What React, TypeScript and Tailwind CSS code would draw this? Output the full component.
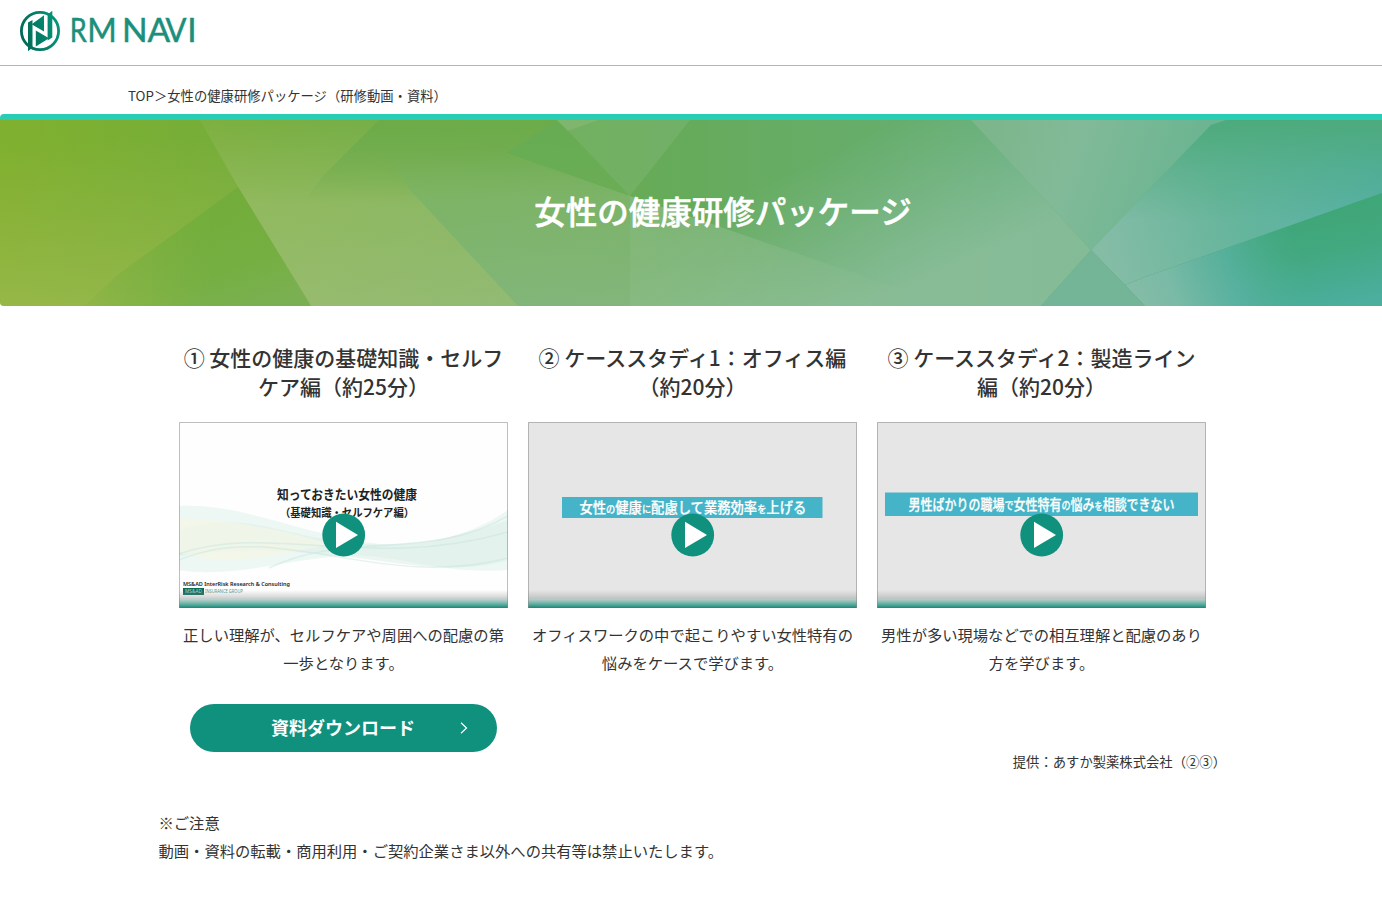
import React from "react";

const JP = "font-['Noto_Sans_CJK_JP',sans-serif]";

function Logo() {
  return (
    <svg className="block h-[46px] w-[180px]" viewBox="18 8 180 46" role="img" aria-label="RM NAVI">
      <defs>
        <linearGradient id="mark" x1="22" y1="36" x2="58" y2="26" gradientUnits="userSpaceOnUse">
          <stop offset="0" stopColor="#006a55" />
          <stop offset="1" stopColor="#07937a" />
        </linearGradient>
      </defs>
      <circle cx="40" cy="31" r="18.6" fill="none" stroke="url(#mark)" strokeWidth="2.8" />
      <g fill="url(#mark)">
        <path d="M28 22.600L32.500 20V47.500L28 51.200Z" />
        <path d="M47.600 14.500L52.300 10.800V37.500L47.600 40.500Z" />
        <path d="M31 24.800L44 15.200V31.500L32 24.500Z" />
        <path d="M35.800 30.500L49 38.200L35.800 46.500Z" />
      </g>
      <text y="42.3" fontSize="33.5" fill="#1b8f7b" stroke="#1b8f7b" strokeWidth=".5" className="font-['Lato'] font-normal">
        <tspan x="69.8" textLength="17" lengthAdjust="spacingAndGlyphs">R</tspan>
        <tspan x="87.2" textLength="29.500" lengthAdjust="spacingAndGlyphs">M</tspan>
        <tspan x="122">N</tspan>
        <tspan x="147.4">A</tspan>
        <tspan x="165.400" textLength="21" lengthAdjust="spacingAndGlyphs">V</tspan>
        <tspan x="187.2">I</tspan>
      </text>
    </svg>
  );
}

function BannerArt() {
  return (
    <svg className="absolute inset-0 h-full w-full" viewBox="0 0 1382 186" preserveAspectRatio="none" aria-hidden="true">
      <defs>
        <linearGradient id="base">
          <stop offset="0" stopColor="#80b02e" />
          <stop offset=".14" stopColor="#77ae38" />
          <stop offset=".33" stopColor="#6cab48" />
          <stop offset=".5" stopColor="#66ab5c" />
          <stop offset=".68" stopColor="#66ae70" />
          <stop offset=".85" stopColor="#52ab7c" />
          <stop offset="1" stopColor="#48aa88" />
        </linearGradient>
        <linearGradient id="light" x1="0" y1="0" x2="0" y2="186" gradientUnits="userSpaceOnUse">
          <stop offset="0" stopColor="#a8c070" stopOpacity=".12" />
          <stop offset=".45" stopColor="#b0c684" stopOpacity=".48" />
          <stop offset="1" stopColor="#b3c794" stopOpacity=".55" />
        </linearGradient>
        <linearGradient id="topShade" x1="0" y1="0" x2="0" y2="80" gradientUnits="userSpaceOnUse">
          <stop offset="0" stopColor="#6cab48" stopOpacity=".95" />
          <stop offset=".35" stopColor="#6cab4c" stopOpacity=".7" />
          <stop offset="1" stopColor="#6cab50" stopOpacity="0" />
        </linearGradient>
        <linearGradient id="mid" x1="0" y1="30" x2="0" y2="186" gradientUnits="userSpaceOnUse">
          <stop offset="0" stopColor="#70b068" stopOpacity="0" />
          <stop offset=".35" stopColor="#70b068" stopOpacity=".55" />
          <stop offset="1" stopColor="#78b27e" stopOpacity=".6" />
        </linearGradient>
        <linearGradient id="left" x1="0" y1="0" x2="0" y2="186" gradientUnits="userSpaceOnUse">
          <stop offset=".1" stopColor="#a8bc58" stopOpacity="0" />
          <stop offset="1" stopColor="#acbf60" stopOpacity=".5" />
        </linearGradient>
        <linearGradient id="dark" x1="230" y1="70" x2="270" y2="186" gradientUnits="userSpaceOnUse">
          <stop offset="0" stopColor="#72ad3a" />
          <stop offset=".6" stopColor="#75af42" />
          <stop offset="1" stopColor="#7bb052" />
        </linearGradient>
        <linearGradient id="darkFade" x1="70" y1="0" x2="210" y2="0" gradientUnits="userSpaceOnUse">
          <stop offset="0" stopColor="#fff" stopOpacity="0" />
          <stop offset="1" stopColor="#fff" />
        </linearGradient>
        <mask id="darkMask"><rect width="400" height="186" fill="url(#darkFade)" /></mask>
        <linearGradient id="center" x1="800" y1="45" x2="865" y2="186" gradientUnits="userSpaceOnUse">
          <stop offset="0" stopColor="#8fc0a4" stopOpacity="0" />
          <stop offset=".35" stopColor="#8fc0a4" stopOpacity=".25" />
          <stop offset="1" stopColor="#8fbf9f" stopOpacity=".8" />
        </linearGradient>
        <linearGradient id="wedge" x1="630" y1="0" x2="930" y2="0" gradientUnits="userSpaceOnUse">
          <stop offset="0" stopColor="#9cc398" stopOpacity=".5" />
          <stop offset=".3" stopColor="#9cc398" stopOpacity=".4" />
          <stop offset="1" stopColor="#9cc398" stopOpacity="0" />
        </linearGradient>
        <linearGradient id="beam" x1="1000" y1="0" x2="1180" y2="60" gradientUnits="userSpaceOnUse">
          <stop offset="0" stopColor="#7db68c" />
          <stop offset=".4" stopColor="#82ba98" />
          <stop offset="1" stopColor="#6db592" />
        </linearGradient>
        <linearGradient id="teal" x1="1110" y1="140" x2="1382" y2="60" gradientUnits="userSpaceOnUse">
          <stop offset="0" stopColor="#84bca6" />
          <stop offset=".45" stopColor="#66b59c" />
          <stop offset="1" stopColor="#54b0a6" />
        </linearGradient>
        <linearGradient id="topGreen" x1="0" y1="0" x2="0" y2="100" gradientUnits="userSpaceOnUse">
          <stop offset="0" stopColor="#4caa7a" stopOpacity=".95" />
          <stop offset=".5" stopColor="#4caa7a" stopOpacity=".4" />
          <stop offset="1" stopColor="#4caa7a" stopOpacity="0" />
        </linearGradient>
        <linearGradient id="corner" x1="1320" y1="90" x2="1340" y2="186" gradientUnits="userSpaceOnUse">
          <stop offset="0" stopColor="#3fa678" />
          <stop offset=".4" stopColor="#42a87f" />
          <stop offset="1" stopColor="#4bae9f" />
        </linearGradient>
        <linearGradient id="cornerFade" x1="1130" y1="186" x2="1300" y2="126" gradientUnits="userSpaceOnUse">
          <stop offset="0" stopColor="#86bca6" />
          <stop offset=".25" stopColor="#7abaa6" />
          <stop offset=".6" stopColor="#5ab2a2" stopOpacity=".8" />
          <stop offset="1" stopColor="#4bae90" stopOpacity="0" />
        </linearGradient>
      </defs>
      <rect width="1382" height="186" fill="url(#base)" />
      <path d="M0 0H200L238 67L311 186H0Z" fill="url(#left)" />
      <path d="M200 0H557L630 76V186H311L238 67Z" fill="url(#light)" />
      <path d="M379 0H557L600 45L630 76V80H305L322 57Z" fill="url(#topShade)" />
      <path d="M238 67L311 186H85L115 157Z" fill="url(#dark)" mask="url(#darkMask)" />
      <path d="M385 30H507L630 76V186H518L410 70Z" fill="url(#mid)" />
      <path d="M557 0L630 76L507 33Z" fill="#66ab54" fillOpacity=".85" />
      <path d="M557 0H599L568 11Z" fill="#7fb56c" />
      <path d="M568 11L599 0H690L630 76Z" fill="#8abd85" fillOpacity=".3" />
      <path d="M630 76L690 98V0H971L1091 130L1041 186H630Z" fill="url(#center)" />
      <path d="M630 76L950 186H630Z" fill="url(#wedge)" />
      <path d="M971 0H1226L1211 5L1091 130Z" fill="url(#beam)" />
      <path d="M1226 0H1382V73L1145 157L1125 165L1091 130L1211 5Z" fill="url(#teal)" />
      <path d="M1226 0H1382V73L1145 157L1125 165L1091 130L1211 5Z" fill="url(#topGreen)" />
      <path d="M1091 130L1145 186H1041Z" fill="#73b596" />
      <path d="M1382 73L1145 157L1125 165L1145 186H1382Z" fill="url(#corner)" />
      <path d="M1382 73L1145 157L1125 165L1145 186H1382Z" fill="url(#cornerFade)" />
    </svg>
  );
}

function Play() {
  return (
    <g>
      <circle cx="164.7" cy="113" r="21.4" fill="#0f917d" />
      <path d="M157 99.7V126L179 113Z" fill="#fff" />
    </g>
  );
}

function Thumb({ id, bg, children }: { id: string; bg: string; children: React.ReactNode }) {
  return (
    <svg className={`block h-[186px] w-[329px] ${JP}`} viewBox="0 0 329 186">
      <defs>
        <linearGradient id={id} x1="0" y1="0" x2="0" y2="1">
          <stop offset="0" stopColor="#999" stopOpacity="0" />
          <stop offset=".4" stopColor="#999" stopOpacity=".38" />
          <stop offset=".52" stopColor="#9fc4bd" stopOpacity=".75" />
          <stop offset="1" stopColor="#0f8a76" />
        </linearGradient>
      </defs>
      <rect width="329" height="186" fill={bg} />
      {children}
      <rect y="168" width="329" height="18" fill={`url(#${id})`} />
      <path d="M.5 186V.5H328.5V186" fill="none" stroke="#888" strokeOpacity=".55" />
      <Play />
    </svg>
  );
}

function ThumbOne() {
  return (
    <Thumb id="fade1" bg="#fefefe">
      <path d="M0 84C60 80 120 112 200 122C255 126 300 108 329 88V148C270 152 235 138 190 134C130 130 60 158 0 148Z" fill="#e3f2ee" fillOpacity=".65" />
      <path d="M0 108C60 90 90 108 150 118C220 130 280 116 329 98V138C270 155 210 138 160 134C90 126 40 128 0 134Z" fill="#d6ebe5" fillOpacity=".45" />
      <path d="M0 96C50 98 100 106 150 122C100 134 40 146 0 130Z" fill="#f3f7e6" fillOpacity=".7" />
      <path d="M0 132C90 100 190 150 329 110M0 138C100 96 200 170 329 136M90 146C170 108 250 140 329 94" fill="none" stroke="#c0e0da" strokeWidth="1.500" strokeOpacity=".4" />
      <text x="98" y="76.800" fontSize="13" fontWeight="700" fill="#222" textLength="140" lengthAdjust="spacingAndGlyphs">知っておきたい女性の健康</text>
      <text x="101" y="94.500" fontSize="11" fontWeight="700" fill="#222" textLength="134" lengthAdjust="spacingAndGlyphs">（基礎知識・セルフケア編）</text>
      <text x="4" y="163.700" fontSize="6" fontWeight="600" fill="#222" textLength="107" lengthAdjust="spacingAndGlyphs" className="font-['Noto_Sans']">MS&amp;AD InterRisk Research &amp; Consulting</text>
      <rect x="4" y="166" width="21" height="7" fill="#0b6b59" />
      <text x="6" y="171.3" fontSize="5" fill="#b7d6cf" textLength="17" lengthAdjust="spacingAndGlyphs" className="font-['Noto_Sans']">MS&amp;AD</text>
      <text x="26" y="171.2" fontSize="4.5" fill="#4f9486" textLength="38" lengthAdjust="spacingAndGlyphs" className="font-['Noto_Sans']">INSURANCE GROUP</text>
    </Thumb>
  );
}

function ThumbTwo() {
  return (
    <Thumb id="fade2" bg="#e6e6e6">
      <rect x="34" y="75" width="260.500" height="21" fill="#46b4c8" />
      <text transform="translate(51.500 90.600) scale(.919 1)" fontSize="14.500" fontWeight="500" fill="#fff" stroke="#fff" strokeWidth=".25">
        女性<tspan fontSize="10">の</tspan>健康<tspan fontSize="10">に</tspan>配慮して業務効率<tspan fontSize="10">を</tspan>上げる
      </text>
    </Thumb>
  );
}

function ThumbThree() {
  return (
    <Thumb id="fade3" bg="#e6e6e6">
      <rect x="8" y="70.500" width="313" height="23.500" fill="#46b4c8" />
      <text transform="translate(31.500 87.600) scale(.826 1)" fontSize="14.500" fontWeight="500" fill="#fff" stroke="#fff" strokeWidth=".25">
        男性ばかりの職場<tspan fontSize="11">で</tspan>女性特有<tspan fontSize="11">の</tspan>悩み<tspan fontSize="10">を</tspan>相談できない
      </text>
    </Thumb>
  );
}

function Course({ title, text, children }: { title: [string, string]; text: [string, string]; children: React.ReactNode }) {
  return (
    <article className="flex w-[329px] flex-col items-center text-center">
      <h2 className="whitespace-nowrap text-[21px] leading-[29px] font-medium">
        {title[0]}<br />{title[1]}
      </h2>
      <div className="mt-[21px]">{children}</div>
      <p className="mt-[13px] whitespace-nowrap text-[15.3px] leading-[27.5px]">
        {text[0]}<br />{text[1]}
      </p>
    </article>
  );
}

export default function App() {
  return (
    <div className={`min-h-[905px] w-full overflow-hidden bg-white text-[#333] ${JP}`}>
      <header className="h-[66px] border-b border-[#b5b5b5] pt-2 pl-[18px]">
        <Logo />
      </header>
      <nav className="flex h-12 items-center whitespace-nowrap pt-[11px] pl-32 text-[13.33px]">
        TOP＞女性の健康研修パッケージ（研修動画・資料）
      </nav>
      <section className="relative h-48 overflow-hidden rounded-l-[4px] border-t-[6px] border-[#28cdb4]">
        <BannerArt />
        <h1 className="relative pt-[67px] pl-16 text-center text-[31.5px] leading-[46px] font-medium text-white [-webkit-text-stroke:0.5px_white]">
          女性の健康研修パッケージ
        </h1>
      </section>
      <main className="pt-[37px] pl-[179px]">
        <div className="flex gap-5">
          <Course title={["① 女性の健康の基礎知識・セルフ", "ケア編（約25分）"]} text={["正しい理解が、セルフケアや周囲への配慮の第", "一歩となります。"]}>
            <ThumbOne />
          </Course>
          <Course title={["② ケーススタディ1：オフィス編", "（約20分）"]} text={["オフィスワークの中で起こりやすい女性特有の", "悩みをケースで学びます。"]}>
            <ThumbTwo />
          </Course>
          <Course title={["③ ケーススタディ2：製造ライン", "編（約20分）"]} text={["男性が多い現場などでの相互理解と配慮のあり", "方を学びます。"]}>
            <ThumbThree />
          </Course>
        </div>
        <a className="mt-7 ml-[11px] grid h-12 w-[307px] grid-cols-[1fr_auto_1fr] items-center rounded-full bg-[#0f917d] text-[18px] leading-[26px] font-bold text-white">
          <span className="col-start-2 -mt-0.5 mr-px">資料ダウンロード</span>
          <svg className="mr-[29px] h-3 w-2 justify-self-end" viewBox="0 0 8 12" fill="none" stroke="white" strokeWidth="1.2"><path d="M1 .8L6.500 6L1 11.200" /></svg>
        </a>
        <p className="w-[1047px] text-right text-[13.33px] leading-5">提供：あすか製薬株式会社（②③）</p>
      </main>
      <footer className="mt-9 ml-[158.5px] text-[15.3px] leading-[28px]">
        <p>※ご注意</p>
        <p>動画・資料の転載・商用利用・ご契約企業さま以外への共有等は禁止いたします。</p>
      </footer>
    </div>
  );
}
